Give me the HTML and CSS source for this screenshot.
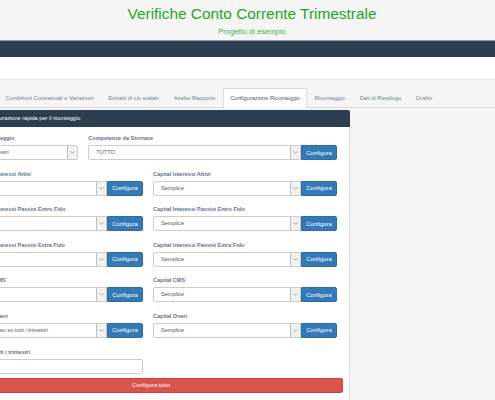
FILE: index.html
```html
<!DOCTYPE html>
<html lang="it">
<head>
<meta charset="utf-8">
<title>Verifiche Conto Corrente Trimestrale</title>
<link rel="stylesheet" href="styles.css">
</head>
<body>
<header class="site-header">
  <h1 class="site-title">Verifiche Conto Corrente Trimestrale</h1>
  <p class="site-subtitle">Progetto di esempio</p>
</header>
<nav class="topbar"></nav>
<div class="band"></div>
<main class="main">
  <ul class="tabs">
    <li class="tab">Condizioni Contrattuali e Variazioni</li>
    <li class="tab">Estratti di c/c scalari</li>
    <li class="tab">Analisi Rapporto</li>
    <li class="tab active">Configurazione Riconteggio</li>
    <li class="tab">Riconteggio</li>
    <li class="tab">Dati di Riepilogo</li>
    <li class="tab">Grafici</li>
  </ul>
  <section class="panel">
    <div class="panel-head">Configurazione rapida per il riconteggio</div>
    <div class="panel-body">
      <div class="grid">
        <div class="field span4">
          <label class="label">Periodo di Conteggio</label>
          <div class="control">
            <div class="select"><span class="value">Su tutti i trimestri</span><span class="arrow"><svg viewBox="0 0 6 4" width="5" height="3"><path d="M0.5 0.5 L3 3 L5.5 0.5" fill="none" stroke="#777" stroke-width="0.9"/></svg></span></div>
          </div>
        </div>
        <div class="field span8">
          <label class="label">Competenze da Stornare</label>
          <div class="control">
            <div class="select joined"><span class="value">TUTTO</span><span class="arrow"><svg viewBox="0 0 6 4" width="5" height="3"><path d="M0.5 0.5 L3 3 L5.5 0.5" fill="none" stroke="#777" stroke-width="0.9"/></svg></span></div>
            <button class="btn">Configura</button>
          </div>
        </div>

        <div class="field span6">
          <label class="label">Tasso Medio Interessi Attivi</label>
          <div class="control">
            <div class="select joined"><span class="value"></span><span class="arrow"><svg viewBox="0 0 6 4" width="5" height="3"><path d="M0.5 0.5 L3 3 L5.5 0.5" fill="none" stroke="#777" stroke-width="0.9"/></svg></span></div>
            <button class="btn">Configura</button>
          </div>
        </div>
        <div class="field span6">
          <label class="label">Capital Interessi Attivi</label>
          <div class="control">
            <div class="select joined"><span class="value">Semplice</span><span class="arrow"><svg viewBox="0 0 6 4" width="5" height="3"><path d="M0.5 0.5 L3 3 L5.5 0.5" fill="none" stroke="#777" stroke-width="0.9"/></svg></span></div>
            <button class="btn">Configura</button>
          </div>
        </div>

        <div class="field span6">
          <label class="label">Tasso Medio Interessi Passivi Entro Fido</label>
          <div class="control">
            <div class="select joined"><span class="value"></span><span class="arrow"><svg viewBox="0 0 6 4" width="5" height="3"><path d="M0.5 0.5 L3 3 L5.5 0.5" fill="none" stroke="#777" stroke-width="0.9"/></svg></span></div>
            <button class="btn">Configura</button>
          </div>
        </div>
        <div class="field span6">
          <label class="label">Capital Interessi Passivi Entro Fido</label>
          <div class="control">
            <div class="select joined"><span class="value">Semplice</span><span class="arrow"><svg viewBox="0 0 6 4" width="5" height="3"><path d="M0.5 0.5 L3 3 L5.5 0.5" fill="none" stroke="#777" stroke-width="0.9"/></svg></span></div>
            <button class="btn">Configura</button>
          </div>
        </div>

        <div class="field span6">
          <label class="label">Tasso Medio Interessi Passivi Extra Fido</label>
          <div class="control">
            <div class="select joined"><span class="value"></span><span class="arrow"><svg viewBox="0 0 6 4" width="5" height="3"><path d="M0.5 0.5 L3 3 L5.5 0.5" fill="none" stroke="#777" stroke-width="0.9"/></svg></span></div>
            <button class="btn">Configura</button>
          </div>
        </div>
        <div class="field span6">
          <label class="label">Capital Interessi Passivi Extra Fido</label>
          <div class="control">
            <div class="select joined"><span class="value">Semplice</span><span class="arrow"><svg viewBox="0 0 6 4" width="5" height="3"><path d="M0.5 0.5 L3 3 L5.5 0.5" fill="none" stroke="#777" stroke-width="0.9"/></svg></span></div>
            <button class="btn">Configura</button>
          </div>
        </div>

        <div class="field span6">
          <label class="label">Tasso Medio CMS</label>
          <div class="control">
            <div class="select joined"><span class="value"></span><span class="arrow"><svg viewBox="0 0 6 4" width="5" height="3"><path d="M0.5 0.5 L3 3 L5.5 0.5" fill="none" stroke="#777" stroke-width="0.9"/></svg></span></div>
            <button class="btn">Configura</button>
          </div>
        </div>
        <div class="field span6">
          <label class="label">Capital CMS</label>
          <div class="control">
            <div class="select joined"><span class="value">Semplice</span><span class="arrow"><svg viewBox="0 0 6 4" width="5" height="3"><path d="M0.5 0.5 L3 3 L5.5 0.5" fill="none" stroke="#777" stroke-width="0.9"/></svg></span></div>
            <button class="btn">Configura</button>
          </div>
        </div>

        <div class="field span6">
          <label class="label">Tasso Medio Oneri</label>
          <div class="control">
            <div class="select joined"><span class="value">L'importo diviso su tutti i trimestri</span><span class="arrow"><svg viewBox="0 0 6 4" width="5" height="3"><path d="M0.5 0.5 L3 3 L5.5 0.5" fill="none" stroke="#777" stroke-width="0.9"/></svg></span></div>
            <button class="btn">Configura</button>
          </div>
        </div>
        <div class="field span6">
          <label class="label">Capital Oneri</label>
          <div class="control">
            <div class="select joined"><span class="value">Semplice</span><span class="arrow"><svg viewBox="0 0 6 4" width="5" height="3"><path d="M0.5 0.5 L3 3 L5.5 0.5" fill="none" stroke="#777" stroke-width="0.9"/></svg></span></div>
            <button class="btn">Configura</button>
          </div>
        </div>

        <div class="field span6 last">
          <label class="label">Ripartito per tutti i trimestri</label>
          <div class="control">
            <div class="input"></div>
          </div>
        </div>
      </div>
      <button class="btn-danger">Configura tutto</button>
    </div>
  </section>
</main>
</body>
</html>
```
FILE: styles.css
```css
html, body {
  margin: 0;
  padding: 0;
  overflow: hidden;
  height: 100%;
}
body {
  font-family: "Liberation Sans", Arial, sans-serif;
  background: #f5f5f5;
  color: #333;
}
.site-header {
  background: #f5f5f5;
  height: 40px;
  box-sizing: border-box;
  padding: 4px 0 0 9px;
  text-align: center;
}
.site-title {
  margin: 0;
  font-size: 15.4px;
  line-height: 20px;
  font-weight: normal;
  color: #1fa81f;
}
.site-subtitle {
  margin: 3px 0 0;
  font-size: 7.6px;
  line-height: 10px;
  color: #3cb43c;
}
.topbar {
  height: 16px;
  background: #2c3e50;
  border-top: 1px solid #8d99a6;
}
.band {
  height: 22px;
  background: #ffffff;
  border-bottom: 1px solid #e3e3e3;
}
.main {
  padding-top: 8px;
}
.tabs {
  list-style: none;
  margin: 0 0 0 -2px;
  padding: 0;
  display: flex;
  border-bottom: 1px solid #dddddd;
  height: 19px;
  width: 700px;
}
.tab {
  font-size: 5.7px;
  color: #6f7f94;
  padding: 0 6.4px;
  line-height: 18px;
  border: 1px solid transparent;
  border-bottom: none;
  border-radius: 2px 2px 0 0;
  white-space: nowrap;
}
.tab.active {
  background: #ffffff;
  border-color: #dddddd;
  color: #555555;
  height: 19px;
}
.panel {
  margin: 2px 0 0 -54px;
  width: 404px;
  box-sizing: border-box;
  background: #ffffff;
  border: 1px solid #dddddd;
  border-top: none;
  border-radius: 2px 2px 0 0;
  height: 400px;
}
.panel-head {
  background: #2c3e50;
  color: #ffffff;
  font-size: 5.6px;
  height: 17px;
  line-height: 17px;
  margin: 0 -1px;
  padding-left: 37px;
  border-radius: 2px 2px 0 0;
}
.panel-body {
  padding: 7px 12px 10px;
}
.grid {
  display: grid;
  grid-template-columns: repeat(12, 1fr);
  column-gap: 10px;
}
.span4 { grid-column: span 4; }
.span8 { grid-column: span 8; }
.span6 { grid-column: span 6; }
.field {
  margin-bottom: 9.6px;
}
.label {
  display: block;
  font-size: 5.5px;
  font-weight: bold;
  line-height: 9px;
  margin-bottom: 2px;
  color: #607290;
  white-space: nowrap;
}
.control {
  display: flex;
  height: 15px;
}
.select {
  flex: 1;
  display: flex;
  align-items: stretch;
  border: 1px solid #cccccc;
  border-radius: 2px;
  box-sizing: border-box;
  background: #ffffff;
  min-width: 0;
}
.select.joined {
  border-radius: 2px 0 0 2px;
}
.value {
  flex: 1;
  font-size: 5.6px;
  line-height: 13px;
  padding-left: 7px;
  color: #555555;
  white-space: nowrap;
  overflow: hidden;
}
.arrow {
  width: 9px;
  border-left: 1px solid #bdbdbd;
  background: #f1f1f1;
  display: flex;
  align-items: center;
  justify-content: center;
}
.btn {
  width: 36px;
  height: 15px;
  box-sizing: border-box;
  border: 1px solid #2e6da4;
  background: #337ab7;
  color: #ffffff;
  font-family: "Liberation Sans", Arial, sans-serif;
  font-size: 5.9px;
  padding: 0;
  border-radius: 0 2px 2px 0;
}
.field.last {
  margin-bottom: 4px;
}
.input {
  width: calc(100% + 2px);
  border: 1px solid #cccccc;
  border-radius: 2px;
  box-sizing: border-box;
  background: #ffffff;
}
.btn-danger {
  display: block;
  width: calc(100% + 6px);
  height: 15px;
  box-sizing: border-box;
  border: 1px solid #d43f3a;
  background: #d9534f;
  color: #ffffff;
  font-family: "Liberation Sans", Arial, sans-serif;
  font-size: 5.8px;
  border-radius: 2px;
  padding: 0;
}
```
